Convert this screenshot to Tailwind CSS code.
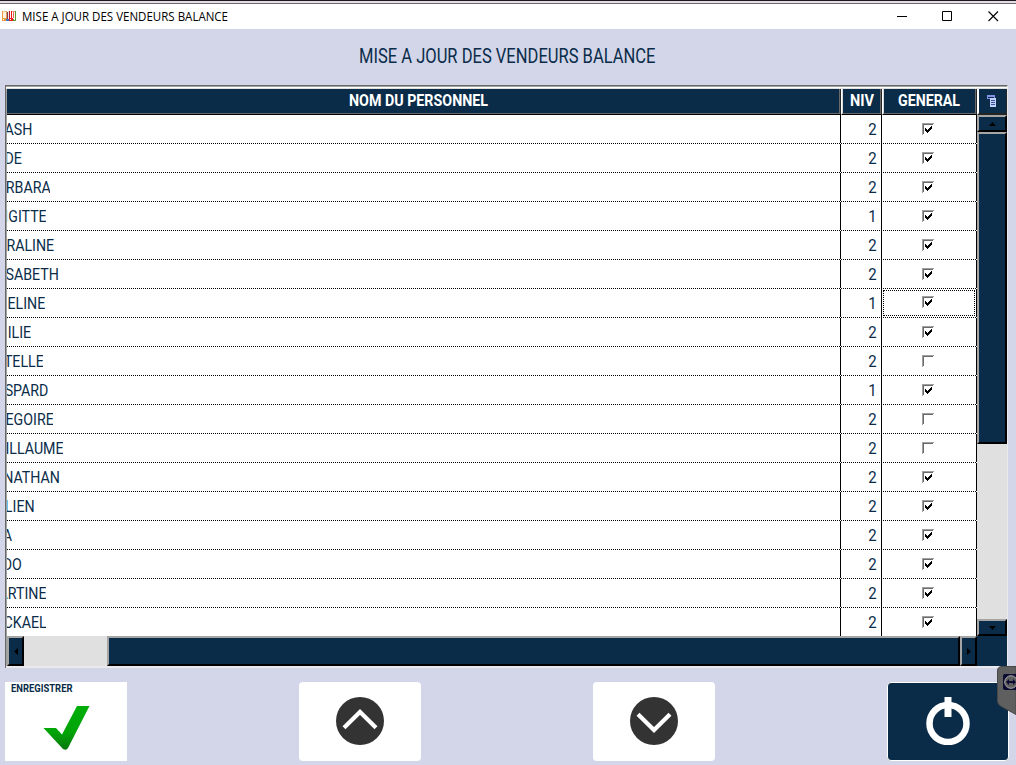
<!DOCTYPE html>
<html lang="fr">
<head>
<meta charset="utf-8">
<title>MISE A JOUR DES VENDEURS BALANCE</title>
<script src="https://cdn.jsdelivr.net/npm/@tailwindcss/browser@4"></script>
</head>
<body class="w-[1016px] h-[765px] overflow-hidden bg-[#d3d6e9] font-[Roboto,sans-serif] text-[#0a2c49] flex flex-col relative">
<header class="h-[29px] shrink-0 bg-white border-t border-[#1c1820] flex flex-col">
  <div class="h-[3px] shrink-0 bg-[#e4dde4] border-b border-[#6e6a70]"></div>
  <div class="h-[25px] flex items-center pl-[2px]">
    <svg class="w-[14px] h-[10px] shrink-0 mb-px" viewBox="0 0 14 10" shape-rendering="crispEdges"><path d="M0 0h1v10H0zM0 7h4v3H0z" fill="#ef9a3a"/><path d="M1 0h4v1H1z" fill="#ecc98a"/><path d="M1 1h3v6H1z" fill="#fff3df"/><path d="M4 0h1v8H4z" fill="#d9a05a"/><path d="M4 8h3v2H4z" fill="#3a7ac0"/><path d="M5 1h1v7H5z" fill="#8a3a4c"/><path d="M6 0h1v8H6z" fill="#f3e4e4"/><path d="M7 0h1v8H7z" fill="#b02030"/><path d="M7 7h4v3H7zM9 0h1v8H9z" fill="#f01820"/><path d="M10 1h3v6h-3z" fill="#fff"/><path d="M10 0h3v1h-3z" fill="#e9a090"/><path d="M13 0h1v10h-1zM11 8h3v2h-3z" fill="#5a9a30"/><path d="M11 1h1v6h-1z" fill="#e86050"/><path d="M1 8h1v1H1zM8 8h1v1H8zM12 8h1v1h-1z" fill="#fff"/></svg>
    <svg class="ml-[6px] w-[216px] h-[20px] mb-px font-['Open_Sans',sans-serif] text-[12px] overflow-visible" fill="#000"><text x="0" y="14.500" textLength="206" lengthAdjust="spacingAndGlyphs">MISE A JOUR DES VENDEURS BALANCE</text></svg>
    <div class="ml-auto flex items-center gap-[35px] pr-[17px] text-black">
      <svg class="w-[11px] h-[11px]" viewBox="0 0 11 11"><path d="M1 5.500h10" stroke="currentColor"/></svg>
      <svg class="w-[11px] h-[11px]" viewBox="0 0 11 11"><path d="M.5 .5h9v9h-9z" fill="none" stroke="currentColor"/></svg>
      <svg class="w-[11px] h-[11px]" viewBox="0 0 11 11"><path d="M.5 .5l9.500 9.500M10 .5L.5 10" stroke="currentColor" stroke-width="1.100"/></svg>
    </div>
  </div>
</header>
<h1 class="h-[56px] shrink-0 flex pl-[359px] pt-[15px]"><svg class="w-[310px] h-[28px] text-[19.500px] overflow-visible" fill="currentColor"><text x="0" y="19" textLength="296.500" lengthAdjust="spacingAndGlyphs">MISE A JOUR DES VENDEURS BALANCE</text></svg></h1>
<main class="ml-[5px] w-[1003px] h-[583px] shrink-0 border-l border-t border-[#696969] border-r border-r-[#e9e9ee] bg-white flex flex-col">
  <div class="h-[3px] shrink-0 border-t border-[#a0a0a0] border-b border-b-[#e0e0e0] bg-white"></div>
  <div class="h-[547px] shrink-0 flex border-l border-[#a0a0a0]">
    <div class="w-[970px] shrink-0 flex flex-col">
      <div class="h-[26px] shrink-0 flex text-white font-bold text-[16px]">
        <div class="w-[834px] bg-[#0a2c49] border-b border-b-black border-r border-r-[#242424]"><div class="h-[25px] border-b border-r border-[#696969] pl-[342px]"><svg class="w-[150px] h-[22px] overflow-visible" fill="currentColor"><text x="0" y="17" textLength="139" lengthAdjust="spacingAndGlyphs">NOM DU PERSONNEL</text></svg></div></div>
        <div class="w-[41px] bg-[#0a2c49] border-l border-l-white border-b border-b-black border-r border-r-[#242424]"><div class="h-[25px] border-l border-l-[#d8d8d8] border-b border-r border-b-[#696969] border-r-[#696969] pl-[7px]"><svg class="w-[28px] h-[22px] overflow-visible" fill="currentColor"><text x="0" y="17" textLength="24" lengthAdjust="spacingAndGlyphs">NIV</text></svg></div></div>
        <div class="w-[95px] bg-[#0a2c49] border-l border-l-white border-b border-b-black border-r border-r-[#242424]"><div class="h-[25px] border-l border-l-[#d8d8d8] border-b border-r border-b-[#696969] border-r-[#696969] pl-[14px]"><svg class="w-[70px] h-[22px] overflow-visible" fill="currentColor"><text x="0" y="17" textLength="62" lengthAdjust="spacingAndGlyphs">GENERAL</text></svg></div></div>
      </div>
      <div id="rows" class="h-[521px] shrink-0 overflow-hidden text-[17px] leading-[20px]"></div>
    </div>
    <div class="w-[30px] shrink-0 flex flex-col bg-[#e0e0e0]">
      <div class="h-[26px] shrink-0 bg-[#0a2c49] border-l-2 border-l-white border-b-2 border-b-[#242424] border-r border-r-[#242424] flex items-center justify-center">
        <svg class="w-[10px] h-[12px] mr-px" viewBox="0 0 10 12" shape-rendering="crispEdges"><path d="M0 0h8v4H0z" fill="#8195e8"/><path d="M1 2h6v1H1z" fill="#0a2c49"/><path d="M3 3h6v9H3z" fill="#c4d2ff"/><path d="M4 5h4v1H4zM4 7h4v1H4zM4 9h4v1H4z" fill="#35549b"/></svg>
      </div>
      <div class="h-[17px] shrink-0 bg-[#0a2c49] border-2 border-t-[#a5a5a5] border-l-[#a5a5a5] border-r-black border-b-black flex items-center justify-center"><svg class="w-[7px] h-[4px]" viewBox="0 0 7 4"><path d="M3.500 0L7 4H0z"/></svg></div>
      <div class="h-[312px] shrink-0 bg-[#0a2c49] border-2 border-t-[#a5a5a5] border-l-[#a5a5a5] border-r-black border-b-black"></div>
      <div class="h-[17px] shrink-0 mt-auto bg-[#0a2c49] border-2 border-t-[#a5a5a5] border-l-[#a5a5a5] border-r-black border-b-black flex items-center justify-center"><svg class="w-[7px] h-[4px]" viewBox="0 0 7 4"><path d="M0 0h7L3.500 4z"/></svg></div>
    </div>
  </div>
  <div class="h-[30px] shrink-0 flex bg-[#e0e0e0] border-l border-[#a0a0a0]">
    <div class="w-[17px] shrink-0 bg-[#0a2c49] border-2 border-t-[#a5a5a5] border-l-[#a5a5a5] border-r-black border-b-black flex items-center justify-center"><svg class="w-[4px] h-[7px]" viewBox="0 0 4 7"><path d="M4 0v7L0 3.500z"/></svg></div>
    <div class="w-[853px] shrink-0 ml-[83px] bg-[#0a2c49] border-2 border-t-[#a5a5a5] border-l-[#a5a5a5] border-r-black border-b-black"></div>
    <div class="w-[17px] shrink-0 bg-[#0a2c49] border-2 border-t-[#a5a5a5] border-l-[#a5a5a5] border-r-black border-b-black flex items-center justify-center"><svg class="w-[4px] h-[7px]" viewBox="0 0 4 7"><path d="M0 0v7l4-3.500z"/></svg></div>
    <div class="w-[30px] bg-[#0a2c49]"></div>
  </div>
  <div class="h-[2px] shrink-0 bg-[#e9e9ee]"></div>
</main>
<footer class="flex-1 flex items-start pl-[5px] pt-[14px]">
  <button class="w-[122px] h-[79px] bg-white flex flex-col items-start">
    <svg class="ml-[6px] mt-px w-[70px] h-[12px] font-bold text-[10px] overflow-visible" fill="currentColor"><text x="0" y="9" textLength="61.500" lengthAdjust="spacingAndGlyphs">ENREGISTRER</text></svg>
    <svg class="ml-[38px] mt-[11px] w-[47px] h-[44px]" viewBox="0 0 47 44"><defs><linearGradient id="g" x1="0" y1="0" x2="0" y2="1"><stop offset="0" stop-color="#00ae08"/><stop offset=".6" stop-color="#02a408"/><stop offset="1" stop-color="#08780c"/></linearGradient></defs><path d="M34 0h12.500L25 42q-1.500 3-5 1L.5 22H13l6 6.500z" fill="url(#g)"/></svg>
  </button>
  <button class="ml-[172px] w-[122px] h-[79px] rounded-[4px] bg-white flex justify-center pt-[15px]">
    <svg class="w-[48px] h-[48px]" viewBox="0 0 48 48"><circle cx="24" cy="24" r="24" fill="#333"/><path d="M8 30.700L24 15l16 15.700" fill="none" stroke="#fff" stroke-width="4.200"/></svg>
  </button>
  <button class="ml-[172px] w-[122px] h-[79px] rounded-[4px] bg-white flex justify-center pt-[15px]">
    <svg class="w-[48px] h-[48px]" viewBox="0 0 48 48"><circle cx="24" cy="24" r="24" fill="#333"/><path d="M8 17.300L24 33l16-15.700" fill="none" stroke="#fff" stroke-width="4.200"/></svg>
  </button>
  <button class="ml-[172px] w-[122px] h-[79px] rounded-[4px] bg-[#0a2c49] border border-white flex justify-center pt-[14px]">
    <svg class="w-[44px] h-[48px]" viewBox="0 0 44 48"><circle cx="22" cy="26.500" r="18.500" fill="none" stroke="#fff" stroke-width="6.500"/><path d="M18.500 0h7v20h-7z" fill="#fff"/></svg>
  </button>
</footer>
<svg class="absolute left-[997px] top-[666px] w-[19px] h-[49px]" viewBox="0 0 19 49"><path d="M19 .5H5Q.5 .5 .5 5v30q0 3 3 5L19 48.500z" fill="#5f5f5f" stroke="#484848"/><path d="M19 8H8q-2 0-2 2v12q0 2 2 2h11z" fill="#0b0b32"/><circle cx="14" cy="16" r="6.300" fill="#5f5f5f" stroke="#aaa" stroke-width="1"/><path d="M9 16l3-3v2h4v-2l3 3-3 3v-2h-4v2z" fill="#0b0b32"/></svg>
<template id="row">
  <div class="h-[29px] flex relative">
    <div class="w-[834px] border-r border-black pt-[4px]"><div class="name flex justify-end overflow-hidden h-[22px]"><span class="whitespace-nowrap origin-right scale-x-[0.835]"></span></div></div>
    <div class="w-[41px] border-r border-black pt-[4px] pr-[4px] flex justify-end"><span class="niv origin-right scale-x-[0.88]"></span></div>
    <div class="chk w-[95px] border-r border-black flex justify-center pt-[8px] pr-[2px]">
      <svg class="w-[12px] h-[12px]" viewBox="0 0 12 12" shape-rendering="crispEdges"><path d="M0 0h12v1H1v11H0z" fill="#a0a0a0"/><path d="M1 1h10v1H2v9H1z" fill="#696969"/><path class="tick" d="M3 5h1v1h1v1h1V6h1V5h1V4h1V3h1v3H9v1H8v1H7v1H6v1H5V9H4V8H3z" fill="#000"/></svg>
    </div>
    <div class="absolute left-0 bottom-0 w-full h-px bg-[repeating-linear-gradient(90deg,#000_0_1px,#fff_1px_2px)]"></div>
  </div>
</template>
<script>
const data=[["ASH",32,2,1],["DE",22,2,1],["RBARA",50,2,1],["IGITTE",46,1,1],["RALINE",54,2,1],["SABETH",59,2,1],["ELINE",45,1,1],["ILIE",31,2,1],["TELLE",43,2,0],["SPARD",48,1,1],["EGOIRE",53,2,0],["ILLAUME",63,2,0],["NATHAN",60,2,1],["LIEN",34,2,1],["A",12,2,1],["DO",22,2,1],["ARTINE",46,2,1],["CKAEL",46,2,1]];
const t=document.getElementById('row'),rows=document.getElementById('rows');
data.forEach(([n,r,v,c],i)=>{
  const e=t.content.cloneNode(true);
  const name=e.querySelector('.name');
  name.style.width=(r-7+.3)+'px';
  name.firstElementChild.textContent=n;
  e.querySelector('.niv').textContent=v;
  if(!c)e.querySelector('.tick').remove();
  if(i===6){
    e.querySelector('.chk').classList.replace('pt-[8px]','pt-[7px]');
    const f=document.createElement('div');f.className='absolute left-[876px] top-[1px] w-[92px] h-[26px] border border-dotted border-black';e.firstElementChild.append(f);
  }
  rows.append(e);
});
</script>
</body>
</html>
